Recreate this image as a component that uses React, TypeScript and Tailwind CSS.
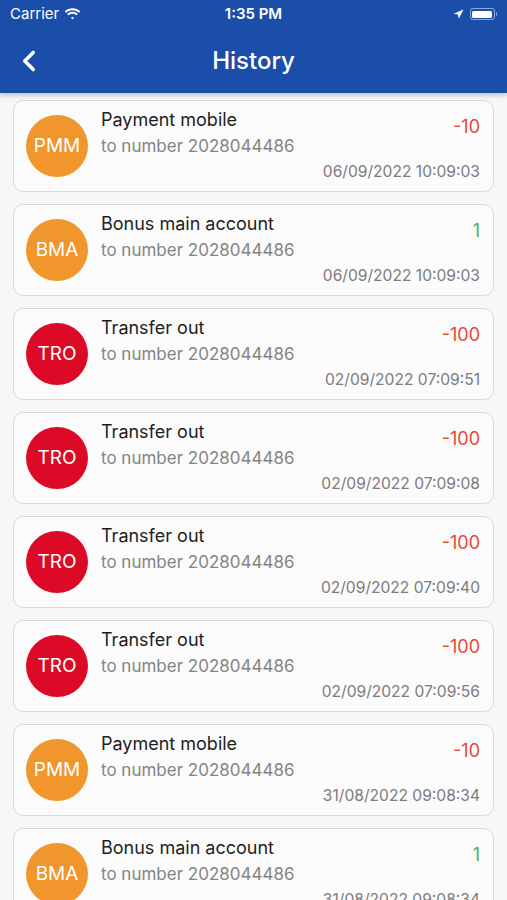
import { ChevronLeft } from 'lucide-react';

interface Txn {
  code: string; title: string; amount: string; date: string;
}

const TXNS: Txn[] = [
  { code: 'PMM', title: 'Payment mobile', amount: '-10', date: '06/09/2022 10:09:03' },
  { code: 'BMA', title: 'Bonus main account', amount: '1', date: '06/09/2022 10:09:03' },
  { code: 'TRO', title: 'Transfer out', amount: '-100', date: '02/09/2022 07:09:51' },
  { code: 'TRO', title: 'Transfer out', amount: '-100', date: '02/09/2022 07:09:08' },
  { code: 'TRO', title: 'Transfer out', amount: '-100', date: '02/09/2022 07:09:40' },
  { code: 'TRO', title: 'Transfer out', amount: '-100', date: '02/09/2022 07:09:56' },
  { code: 'PMM', title: 'Payment mobile', amount: '-10', date: '31/08/2022 09:08:34' },
  { code: 'BMA', title: 'Bonus main account', amount: '1', date: '31/08/2022 09:08:34' },
];

const AVATAR: Record<string, string> = { PMM: 'bg-[#f0962c]', BMA: 'bg-[#f0962c]', TRO: 'bg-[#dc0a26]' };

function StatusBar() {
  return (
    <div className="h-[28px] flex items-center justify-between px-[10px] text-white text-[15px]">
      <div className="flex items-center gap-[5px] w-[120px]">
        <span>Carrier</span>
        <svg width="17" height="13" viewBox="0 0 17 13" fill="white">
          <path d="M8.5 2.2c2.5 0 4.8 1 6.5 2.6l1.3-1.4C14.3 1.4 11.5.2 8.5.2S2.7 1.4.7 3.4L2 4.8c1.7-1.6 4-2.6 6.5-2.6z" />
          <path d="M8.5 5.7c1.5 0 2.9.6 4 1.6l1.3-1.4c-1.4-1.3-3.3-2.2-5.300-2.2s-3.9.9-5.3 2.2l1.3 1.4c1.1-1 2.5-1.6 4-1.6z" />
          <path d="M8.5 9.1c.6 0 1.1.2 1.6.6L8.5 11.5 6.9 9.7c.5-.4 1-.6 1.6-.6z" />
        </svg>
      </div>
      <span className="font-semibold">1:35 PM</span>
      <div className="flex items-center justify-end gap-[6px] w-[120px]">
        <svg width="11" height="11" viewBox="0 0 12 12" fill="white">
          <path d="M11.5.5L.8 5.2l4.6.9.9 4.6z" />
        </svg>
        <div className="flex items-center">
          <div className="w-[25px] h-[12px] rounded-[3px] border border-white/50 p-[1.5px]">
            <div className="w-full h-full bg-white rounded-[1.5px]" />
          </div>
          <div className="w-[1.5px] h-[4px] bg-white/50 rounded-r-sm ml-[1px]" />
        </div>
      </div>
    </div>
  );
}

function Row({ t }: { t: Txn }) {
  const positive = !t.amount.startsWith('-');
  return (
    <div className="h-[92px] bg-[#fbfbfb] border border-[#d9d9d9] rounded-[10px] flex items-center pl-[12px] pr-[13px]">
      <div className={`w-[62px] h-[62px] rounded-full ${AVATAR[t.code]} flex items-center justify-center text-white text-[19px] shrink-0`}>
        {t.code}
      </div>
      <div className="flex-1 self-stretch ml-[13px] pt-[5px] flex flex-col">
        <div className="flex justify-between items-start">
          <div>
            <p className="text-[18px] leading-[27px] text-[#1e1e1e]">{t.title}</p>
            <p className="text-[17px] leading-[27px] text-[#858585]">to number 2028044486</p>
          </div>
          <p className={`text-[18px] leading-[27px] mt-[7px] ${positive ? 'text-[#4caf50]' : 'text-[#e8483c]'}`}>{t.amount}</p>
        </div>
        <p className="text-right text-[15.6px] leading-[20px] mt-[2px] text-[#7c7c7c]">{t.date}</p>
      </div>
    </div>
  );
}

export default function App() {
  return (
    <div className="w-[507px] h-[900px] overflow-hidden bg-[#f7f7f7] flex flex-col" style={{ fontFamily: 'Inter, Roboto, "Noto Sans", sans-serif' }}>
      <div className="bg-[#1a4ea8] shadow-[0_2px_5px_rgba(0,0,0,0.25)] relative z-10 shrink-0">
        <StatusBar />
        <div className="h-[65px] flex items-center relative">
          <ChevronLeft className="text-white ml-[12px]" size={34} strokeWidth={2.5} />
          <h1 className="absolute inset-x-0 text-center text-white text-[24px] font-medium pointer-events-none">History</h1>
        </div>
      </div>
      <div className="flex flex-col gap-[12px] px-[13px] pt-[7px]">
        {TXNS.map((t, i) => <Row key={i} t={t} />)}
      </div>
    </div>
  );
}
